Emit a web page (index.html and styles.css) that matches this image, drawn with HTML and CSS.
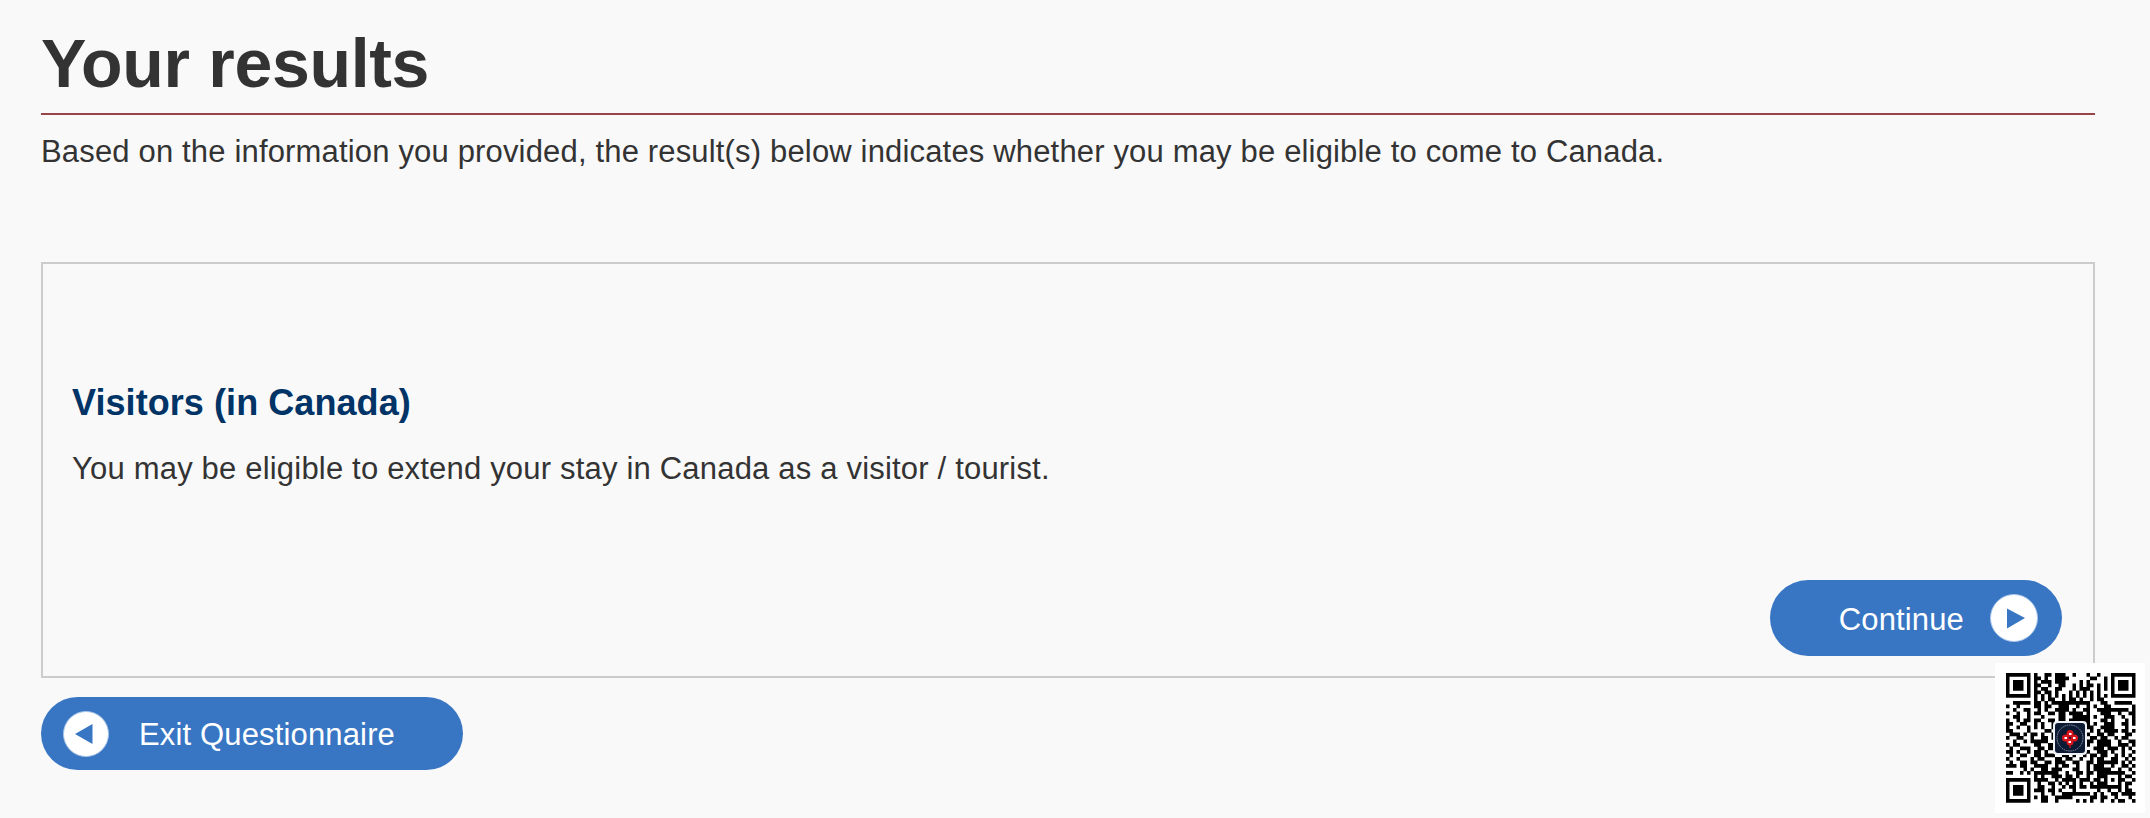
FILE: index.html
```html
<!DOCTYPE html>
<html lang="en">
<head>
  <meta charset="UTF-8">
  <meta name="viewport" content="width=device-width, initial-scale=1.0">
  <title>Your results</title>
  <link rel="stylesheet" href="styles.css">
</head>
<body>
  <main>
    <h1>Your results</h1>
    <p class="intro">Based on the information you provided, the result(s) below indicates whether you may be eligible to come to Canada.</p>

    <section class="result">
      <h2>Visitors (in Canada)</h2>
      <p>You may be eligible to extend your stay in Canada as a visitor / tourist.</p>
      <button class="btn continue">
        <span>Continue</span>
        <svg width="48" height="48" viewBox="0 0 48 48">
          <circle cx="24" cy="24" r="23.5" fill="#fff" stroke="#a9c5e8"/>
          <path d="M17 14.500L35 24L17 34.500Z" fill="#3876c4"/>
        </svg>
      </button>
    </section>

    <button class="btn exit">
      <svg width="46" height="46" viewBox="0 0 46 46">
        <circle cx="23" cy="23" r="22.500" fill="#fff" stroke="#a9c5e8"/>
        <path d="M29.500 13L12 23L29.500 33Z" fill="#3876c4"/>
      </svg>
      <span>Exit Questionnaire</span>
    </button>
  </main>

  <div class="qr">
    <svg width="129.5" height="129.5" viewBox="0 0 37 37">
      <path id="modules" fill="#000"/>
    </svg>
    <svg class="qr-logo" width="34" height="34" viewBox="0 0 34 34">
      <rect width="34" height="34" rx="4" fill="#eef1f5"/>
      <rect x="2" y="2" width="30" height="30" rx="3" fill="#0c1a33"/>
      <circle cx="17" cy="17" r="13" fill="none" stroke="#8793a8" stroke-width="1" stroke-dasharray="1.5 .8"/>
      <g fill="#d8141c">
        <circle cx="17" cy="12.5" r="3.5"/>
        <circle cx="12.5" cy="17" r="3.5"/>
        <circle cx="21.5" cy="17" r="3.5"/>
        <circle cx="17" cy="21" r="3.5"/>
        <path d="M16.4 22h1.2v5h-1.2z"/>
      </g>
      <g fill="#fff">
        <rect x="16" y="12" width="2.5" height="2"/>
        <rect x="11.5" y="16" width="2.5" height="2"/>
        <rect x="20" y="16" width="2.5" height="2"/>
        <rect x="15.5" y="20" width="2.5" height="2"/>
      </g>
    </svg>
  </div>

  <script>
    // one string per row, # is a dark module
    const rows = [
      "#######.#..##.###..#...#..#...#######",
      "#.....#.##.#..####......##..#.#.....#",
      "#.###.#.#.###.###....#.#....#.#.###.#",
      "#.###.#.##..#..##..#.#.##.#.#.#.###.#",
      "#.###.#.#.##..##...#.###..#.#.#.###.#",
      "#.....#.##.##.#...#.#.#.#.#...#.....#",
      "#######.#.#.#.#.#.#.#.#.#.#.#.#######",
      "........#.#.##..#.##.#..#.##.........",
      "..#####.##.#.###########...##..#####.",
      "#..#....##.##..###..#..#.#..##......#",
      "..#..##..#.#..####.#..##..#########.#",
      "#..#..#.##..##.##.####.#...###..#..##",
      "..##..#...#....##..#####.#..###..#..#",
      "#..#.##.##..##.##.######...##.#...#.#",
      "##..##..#.#..##..#######.#..###..##.#",
      "#..#..#.#.#..##..#####.##..####...#..",
      "##....#....##..####..#..#.#.####.##.#",
      ".###.#.##.#..##.##.##.##..##.##...##.",
      "#..##..#..##.#..#.##.#..##.##..#.##..",
      "..#..#.#####..#..##.##.##.####..#..##",
      "#.##....##..##..#.#.##.#..####..###.#",
      ".#..###..##.###..##.###..###.###.#.#.",
      "##.#..#.##.#..##.##.#.##..###.#..#..#",
      ".#..##..##.###..##.#..#.##.##..#.#.#.",
      "#..#...#.##...##.##..#..#.##..##..#.#",
      ".#..##.##..##.###..##..##.######.#.#.",
      "###.##..####..#.##..#..#.###..#..##.#",
      ".....#.#..##.###...##..#.#####..#..#.",
      "##..#.#.#######..#..##.##.########..#",
      "........#.#..###.##.#..#..###...#.##.",
      "#######.####..#.####.###.##.#.#.##..#",
      "#.....#..#..##.#.#.#.#..#.###...#.##.",
      "#.###.#..##..#..#.##.##.#########.#..",
      "#.###.#.###.##.#...#......#..#..#.##.",
      "#.###.#...#..#..########.#.#..##.####",
      "#.....#.#.##..#####.....##.##..#...#.",
      "#######...##..#.....#.#.#..#..#.##..#"
    ];
    let d = "";
    rows.forEach((row, y) => {
      for (const run of row.matchAll(/#+/g)) {
        d += `M${run.index} ${y}h${run[0].length}v1.04h-${run[0].length}z`;
      }
    });
    document.getElementById("modules").setAttribute("d", d);
  </script>
</body>
</html>
```

FILE: styles.css
```css
* {
  box-sizing: border-box;
}
body {
  margin: 0;
  height: 818px;
  overflow: hidden;
  background-color: #f9f9f9;
  color: #333;
  font-family: "Liberation Sans", Arial, sans-serif;
  font-size: 31px;
  line-height: 44px;
}
main {
  padding: 23px 55px 0 41px;
}
h1 {
  margin: 0;
  height: 92px;
  border-bottom: 2px solid #984449;
  font-size: 68px;
  line-height: 80px;
  letter-spacing: -0.3px;
}
.intro {
  margin: 15px 0 88px;
  letter-spacing: 0.165px;
}
.result {
  display: flex;
  flex-direction: column;
  height: 416px;
  padding: 117px 31px 20px 29px;
  border: 2px solid #ccc;
}
h2 {
  margin: 0 0 22px;
  color: #036;
  font-size: 36px;
  line-height: 44px;
  letter-spacing: 0.07px;
}
.result p {
  margin: 0;
  letter-spacing: 0.19px;
}
.btn {
  display: flex;
  align-items: center;
  border: none;
  border-radius: 38px;
  background-color: #3876c4;
  color: #fff;
  font-family: inherit;
  font-size: 31px;
  letter-spacing: 0.15px;
}
.continue {
  justify-content: flex-end;
  gap: 26px;
  width: 292px;
  height: 76px;
  margin: auto 0 0 auto;
  padding: 0 24px 0 0;
}
.exit {
  gap: 30px;
  width: 422px;
  height: 73px;
  margin-top: 19px;
  padding: 0 0 0 22px;
}
.btn span {
  padding-top: 3px;
}
/* code card floats over the corner of the page */
.qr {
  position: absolute;
  right: 5px;
  bottom: 5px;
  width: 150px;
  height: 150px;
  padding: 10px 0 0 11px;
  background-color: #fff;
}
.qr-logo {
  position: absolute;
  left: 58px;
  top: 58px;
}
```
